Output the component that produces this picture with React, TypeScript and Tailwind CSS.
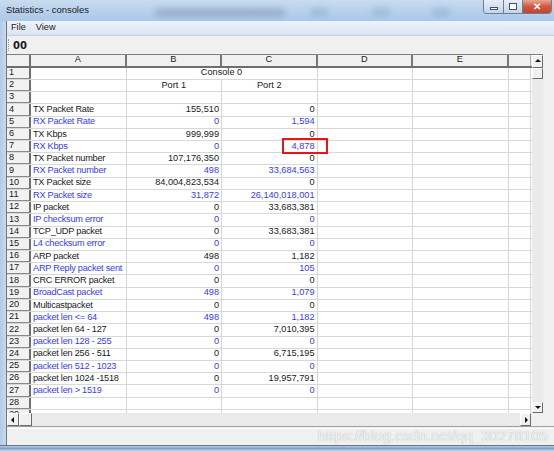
import React from "react";

type Row = { label: string; b: string; c: string; blue?: boolean };

const ROWS: Row[] = [
  { label: "", b: "", c: "" },
  { label: "", b: "Port 1", c: "Port 2" },
  { label: "", b: "", c: "" },
  { label: "TX Packet Rate", b: "155,510", c: "0" },
  { label: "RX Packet Rate", b: "0", c: "1,594", blue: true },
  { label: "TX Kbps", b: "999,999", c: "0" },
  { label: "RX Kbps", b: "0", c: "4,878", blue: true },
  { label: "TX Packet number", b: "107,176,350", c: "0" },
  { label: "RX Packet number", b: "498", c: "33,684,563", blue: true },
  { label: "TX Packet size", b: "84,004,823,534", c: "0" },
  { label: "RX Packet size", b: "31,872", c: "26,140,018,001", blue: true },
  { label: "IP packet", b: "0", c: "33,683,381" },
  { label: "IP checksum error", b: "0", c: "0", blue: true },
  { label: "TCP_UDP packet", b: "0", c: "33,683,381" },
  { label: "L4 checksum error", b: "0", c: "0", blue: true },
  { label: "ARP packet", b: "498", c: "1,182" },
  { label: "ARP Reply packet sent", b: "0", c: "105", blue: true },
  { label: "CRC ERROR packet", b: "0", c: "0" },
  { label: "BroadCast packet", b: "498", c: "1,079", blue: true },
  { label: "Multicastpacket", b: "0", c: "0" },
  { label: "packet len <= 64", b: "498", c: "1,182", blue: true },
  { label: "packet len 64 - 127", b: "0", c: "7,010,395" },
  { label: "packet len 128 - 255", b: "0", c: "0", blue: true },
  { label: "packet len 256 - 511", b: "0", c: "6,715,195" },
  { label: "packet len 512 - 1023", b: "0", c: "0", blue: true },
  { label: "packet len 1024 -1518", b: "0", c: "19,957,791" },
  { label: "packet len > 1519", b: "0", c: "0", blue: true },
  { label: "", b: "", c: "" },
  { label: "", b: "", c: "" },
];

const cell = "h-full border-r border-[#d6d6d6] shrink-0 flex items-center overflow-hidden whitespace-nowrap";

const Triangle = ({ dir }: { dir: "up" | "down" | "left" | "right" }) => {
  const pts = {
    up: "1,5 4,2 7,5",
    down: "1,2 4,5 7,2",
    left: "5,1 2,4 5,7",
    right: "3,1 6,4 3,7",
  }[dir];
  return (
    <svg width="8" height="8" viewBox="0 0 8 8">
      <polygon points={pts} fill="#111" />
    </svg>
  );
};

const ScrollBtn = ({ dir, className }: { dir: "up" | "down" | "left" | "right"; className: string }) => (
  <div
    className={`flex items-center justify-center bg-[#f0f0f0] border border-t-white border-l-white border-r-[#6b6b6b] border-b-[#6b6b6b] ${className}`}
  >
    <Triangle dir={dir} />
  </div>
);

const App = () => {
  return (
    <div className="w-[554px] h-[451px] overflow-hidden relative bg-[#bcd3ea] text-[9.2px] text-[#1a1a1a] font-['Liberation_Sans',Arial,sans-serif] flex flex-col">
      {/* title bar */}
      <div className="h-[21px] shrink-0 relative bg-gradient-to-b from-[#c9dcef] via-[#b8d1ec] to-[#aac8e8] flex items-center pl-[6px] overflow-hidden">
        <div className="absolute left-[155px] top-[9px] w-[130px] h-[7px] bg-[#4c5866] opacity-30 blur-[3px] rounded" />
        <div className="absolute left-[310px] top-[8px] w-[18px] h-[8px] bg-[#5d7fa6] opacity-25 blur-[3px] rounded" />
        <div className="absolute left-[372px] top-[8px] w-[18px] h-[8px] bg-[#5d7fa6] opacity-25 blur-[3px] rounded" />
        <div className="absolute left-[432px] top-[8px] w-[18px] h-[8px] bg-[#5d7fa6] opacity-25 blur-[3px] rounded" />
        <span className="relative text-[9.4px] text-[#1b1b1b]">Statistics - consoles</span>
        <div className="absolute right-[2px] top-0 h-[14px] flex border border-t-0 border-[#6f8094] rounded-b-[4px] overflow-hidden">
          <div className="w-[20px] h-full bg-gradient-to-b from-[#e7eef7] to-[#c4d5e9] border-r border-[#6f8094] flex items-center justify-center">
            <div className="w-[8px] h-[3px] border border-[#40536a] bg-white mt-[4px]" />
          </div>
          <div className="w-[19px] h-full bg-gradient-to-b from-[#e7eef7] to-[#c4d5e9] border-r border-[#6f8094] flex items-center justify-center">
            <div className="w-[8px] h-[7px] border border-[#40536a] bg-white" />
          </div>
          <div className="w-[28px] h-full bg-gradient-to-b from-[#e8a593] via-[#d2553f] to-[#c3452e] flex items-center justify-center text-white font-bold text-[10px] leading-none">
            ✕
          </div>
        </div>
      </div>

      <div className="flex-1 flex min-h-0">
        <div className="w-[7px] shrink-0 bg-gradient-to-r from-[#b3cbe6] to-[#c8d9ec] border-r border-[#6d7683]" />
        <div className="flex-1 flex flex-col min-w-0 bg-[#f0f0f0]">
          {/* menu */}
          <div className="h-[15px] shrink-0 bg-gradient-to-b from-[#eef2fa] to-[#dbe3f3] border-b border-[#c9d0dd] flex items-center pl-[4px] gap-[10px]">
            <span>File</span>
            <span>View</span>
          </div>
          {/* toolbar */}
          <div className="h-[18px] shrink-0 bg-[#f0f0f0] flex items-center">
            <div className="w-[3px] h-[12px] ml-[1px] border-l border-dotted border-[#9a9a9a]" />
            <span className="ml-[2px] font-bold text-[10px] font-['DejaVu_Sans',sans-serif]">00</span>
          </div>
          {/* grid area */}
          <div className="h-[372px] shrink-0 flex">
            <div className="w-[536px] shrink-0 flex flex-col border-t border-[#808080] bg-white">
              <div className="flex flex-1 min-h-0">
                <div className="w-[525px] shrink-0 flex flex-col overflow-hidden relative">
                  {/* column header */}
                  <div className="h-[12.7px] shrink-0 flex bg-[#f0f0f0] border-b-2 border-[#6e6e6e]">
                    <div className="w-[24px] shrink-0 h-full border-r-2 border-[#6e6e6e]" />
                    {["A", "B", "C", "D", "E"].map((l) => (
                      <div key={l} className="w-[95.5px] shrink-0 h-full border-r-2 border-[#777] flex items-center justify-center">
                        {l}
                      </div>
                    ))}
                    <div className="w-[22px] shrink-0 h-full border-r border-[#aaa]" />
                  </div>
                  {ROWS.map((r, i) => (
                    <div key={i} className={`h-[12.22px] shrink-0 flex border-b border-[#d8d8d8] ${r.blue ? "text-[#3a3af0]" : "text-[#1a1a1a]"}`}>
                      <div className="w-[24px] shrink-0 h-full bg-[#f2f2f2] border-r-2 border-[#6e6e6e] border-b border-b-[#8a8a8a] -mb-px flex items-center pl-[2px] text-[#1a1a1a]">
                        {i + 1}
                      </div>
                      <div className={`${cell} w-[95.5px] pl-[2px] tracking-[-0.25px]`}>{r.label}</div>
                      {i === 0 ? (
                        <div className={`${cell} w-[191px] justify-center`}>Console 0</div>
                      ) : (
                        <>
                          <div className={`${cell} w-[95.5px] ${i === 1 ? "justify-center" : "justify-end pr-[2px]"}`}>{r.b}</div>
                          <div className={`${cell} w-[95.5px] ${i === 1 ? "justify-center" : "justify-end pr-[2px]"}`}>{r.c}</div>
                        </>
                      )}
                      <div className={`${cell} w-[95.5px]`} />
                      <div className={`${cell} w-[95.5px]`} />
                      <div className={`${cell} w-[22px]`} />
                    </div>
                  ))}
                  {/* red highlight over C7 */}
                  <div className="absolute left-[275px] top-[83px] w-[46px] h-[16px] border-2 border-[#e8161b]" />
                </div>
                {/* vertical scrollbar */}
                <div className="w-[11px] shrink-0 flex flex-col bg-[#eaeaea]">
                  <ScrollBtn dir="up" className="h-[12.7px] shrink-0" />
                  <div className="h-[11px] shrink-0 bg-[#f0f0f0] border border-t-white border-l-white border-r-[#6b6b6b] border-b-[#6b6b6b]" />
                  <div className="flex-1" />
                  <ScrollBtn dir="down" className="h-[11px] shrink-0" />
                </div>
              </div>
              {/* horizontal scrollbar */}
              <div className="h-[13px] shrink-0 flex bg-[#eaeaea]">
                <ScrollBtn dir="left" className="w-[12px] shrink-0" />
                <div className="w-[13px] shrink-0 bg-[#f0f0f0] border border-t-white border-l-white border-r-[#6b6b6b] border-b-[#6b6b6b]" />
                <div className="flex-1" />
                <ScrollBtn dir="right" className="w-[11px] shrink-0" />
                <div className="w-[12px] shrink-0 bg-[#f0f0f0]" />
              </div>
            </div>
            <div className="flex-1 bg-[#f0f0f0]" />
          </div>
          {/* status bar */}
          <div className="flex-1 bg-[#f0f0f0] border-t border-[#a0a0a0] relative">
            <div className="h-[2px] border-b border-white" />
            <span className="absolute right-[6px] top-[-2px] text-[15px] text-white/85 [text-shadow:0_0_1px_#9a9a9a] font-['Liberation_Sans',sans-serif] whitespace-nowrap">
              https://blog.csdn.net/qq_30278105
            </span>
          </div>
        </div>
      </div>
      <div className="h-[6px] shrink-0 bg-gradient-to-b from-[#b5cbe4] via-[#7ea1c9] to-[#c6d8ec] border-t border-[#6d7683]" />
    </div>
  );
};

export default App;
